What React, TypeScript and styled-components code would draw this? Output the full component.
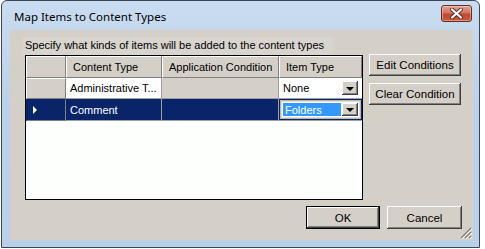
import styled, { createGlobalStyle } from "styled-components";

const GlobalStyle = createGlobalStyle`
  html, body {
    margin: 0;
    padding: 0;
    background: #ffffff;
  }
  body {
    font-family: "Liberation Sans", Arial, sans-serif;
    font-size: 11px;
    color: #000;
  }
`;

const NAVY = "#0a246a";
const FACE = "#d4d0c8";

const App = () => {
  return (
    <>
      <GlobalStyle />
      <Window>
        <TitleBar>
          <Title>Map Items to Content Types</Title>
          <CloseButton aria-label="Close">
            <svg width="13" height="11" viewBox="0 0 13 11">
              <path
                d="M2 1.5 L11 9.5 M11 1.5 L2 9.5"
                stroke="#5a2a20"
                strokeWidth="4"
                strokeLinecap="round"
              />
              <path
                d="M2 1.5 L11 9.5 M11 1.5 L2 9.5"
                stroke="#ffffff"
                strokeWidth="2.2"
                strokeLinecap="round"
              />
            </svg>
          </CloseButton>
        </TitleBar>
        <Client>
          <TopRow>
            <GridColumn>
              <Caption>Specify what kinds of items will be added to the content types</Caption>
              <Grid>
                <HeaderCell />
                <HeaderCell>Content Type</HeaderCell>
                <HeaderCell>Application Condition</HeaderCell>
                <HeaderCell>Item Type</HeaderCell>

                <RowHeader />
                <DataCell>Administrative T...</DataCell>
                <DataCell $readonly />
                <ComboCell>
                  <Combo>
                    <ComboText>None</ComboText>
                    <DropButton>
                      <Arrow />
                    </DropButton>
                  </Combo>
                </ComboCell>

                <RowHeader $selected>
                  <Pointer />
                </RowHeader>
                <DataCell $selected>Comment</DataCell>
                <DataCell $selected />
                <ComboCell $selected>
                  <Combo $active>
                    <ComboText $highlight>Folders</ComboText>
                    <DropButton>
                      <Arrow />
                    </DropButton>
                  </Combo>
                </ComboCell>
              </Grid>
            </GridColumn>
            <SideButtons>
              <Button $w={92} $h={22}>Edit Conditions</Button>
              <Button $w={92} $h={22}>Clear Condition</Button>
            </SideButtons>
          </TopRow>
          <BottomRow>
            <Button $w={74} $h={23} $default>OK</Button>
            <Button $w={75} $h={23}>Cancel</Button>
          </BottomRow>
          <Grip width="12" height="12" viewBox="0 0 12 12">
            <path d="M11 1 L1 11 M11 5 L5 11 M11 9 L9 11" stroke="#808080" strokeWidth="1.2" />
            <path d="M12 2 L2 12 M12 6 L6 12 M12 10 L10 12" stroke="#ffffff" strokeWidth="1" />
          </Grip>
        </Client>
      </Window>
    </>
  );
};

const Window = styled.div`
  box-sizing: border-box;
  margin-left: 1px;
  width: 479px;
  height: 248px;
  border: 1px solid #3b4654;
  border-radius: 6px 6px 0 0;
  background: linear-gradient(180deg, #c9dcf0 0%, #bcd2ea 40%, #b9d0e9 100%);
  padding: 0 6px 7px 8px;
  display: flex;
  flex-direction: column;
  box-shadow: 0 1px 0 #6fb7c0;
`;

const TitleBar = styled.div`
  height: 29px;
  display: flex;
  align-items: center;
  justify-content: space-between;
  padding-top: 2px;
  box-sizing: border-box;
`;

const Title = styled.span`
  font-family: "Noto Sans", "Liberation Sans", sans-serif;
  font-size: 11.5px;
  color: #000;
  margin-left: 4px;
`;

const CloseButton = styled.div`
  box-sizing: border-box;
  width: 31px;
  height: 17px;
  margin-right: 1px;
  margin-top: -6px;
  border: 1px solid #6a2b22;
  border-radius: 3px;
  background: linear-gradient(180deg, #e4a493 0%, #d3735f 45%, #c14a32 55%, #c8593d 100%);
  box-shadow: inset 0 0 0 1px rgba(255, 255, 255, 0.35);
  display: flex;
  align-items: center;
  justify-content: center;
`;

const Client = styled.div`
  position: relative;
  flex: 1;
  background: ${FACE};
  padding: 7px 11px 11px 12px;
  display: flex;
  flex-direction: column;
  gap: 6px;
`;

const TopRow = styled.div`
  display: flex;
  align-items: flex-start;
  gap: 6px;
`;

const GridColumn = styled.div`
  display: flex;
  flex-direction: column;
  width: 341px;
`;

const Caption = styled.div`
  height: 18px;
  width: 311px;
  padding-left: 3px;
  box-sizing: border-box;
  line-height: 16px;
  background: #d8d5ce;
  white-space: nowrap;
`;

const Grid = styled.div`
  margin-left: 3px;
  width: 338px;
  height: 145px;
  box-sizing: border-box;
  border: 1px solid #000;
  background: #fdfffd;
  display: grid;
  grid-template-columns: 40px 96px 117px 83px;
  grid-template-rows: 22px 21px 22px;
  align-content: start;
`;

const HeaderCell = styled.div`
  box-sizing: border-box;
  background: ${FACE};
  border-top: 1px solid #fff;
  border-left: 1px solid #fff;
  border-right: 1px solid #808080;
  border-bottom: 1px solid #808080;
  padding-left: 6px;
  display: flex;
  align-items: center;
  white-space: nowrap;
`;

const RowHeader = styled.div<{ $selected?: boolean }>`
  box-sizing: border-box;
  background: ${(p) => (p.$selected ? NAVY : FACE)};
  border-top: 1px solid ${(p) => (p.$selected ? NAVY : "#fff")};
  border-left: 1px solid ${(p) => (p.$selected ? NAVY : "#fff")};
  border-right: 1px solid #808080;
  border-bottom: 1px solid #808080;
  display: flex;
  align-items: center;
  padding-left: 6px;
`;

const Pointer = styled.div`
  width: 0;
  height: 0;
  border-top: 4px solid transparent;
  border-bottom: 4px solid transparent;
  border-left: 4px solid #fff;
`;

const DataCell = styled.div<{ $selected?: boolean; $readonly?: boolean }>`
  box-sizing: border-box;
  background: ${(p) => (p.$selected ? NAVY : p.$readonly ? FACE : "#fff")};
  color: ${(p) => (p.$selected ? "#fff" : "#000")};
  border-right: 1px solid #a0a0a0;
  border-bottom: 1px solid #a0a0a0;
  padding-left: 4px;
  display: flex;
  align-items: center;
  white-space: nowrap;
  overflow: hidden;
`;

const ComboCell = styled.div<{ $selected?: boolean }>`
  box-sizing: border-box;
  background: ${(p) => (p.$selected ? NAVY : "#fff")};
  border-bottom: 1px solid #a0a0a0;
  padding: 1px;
  display: flex;
`;

const Combo = styled.div<{ $active?: boolean }>`
  flex: 1;
  box-sizing: border-box;
  background: #fff;
  border: 1px solid ${(p) => (p.$active ? "#b8b4ac" : "#fff")};
  box-shadow: ${(p) => (p.$active ? "inset 0 0 0 1px #e4e2dc" : "none")};
  padding: ${(p) => (p.$active ? "2px" : "1px 2px 1px 0")};
  display: flex;
  align-items: stretch;
  gap: 1px;
`;

const ComboText = styled.div<{ $highlight?: boolean }>`
  flex: 1;
  display: flex;
  align-items: center;
  padding-left: 2px;
  background: ${(p) => (p.$highlight ? "#3399ff" : "transparent")};
  color: ${(p) => (p.$highlight ? "#fff" : "#000")};
`;

const DropButton = styled.div`
  box-sizing: border-box;
  width: 16px;
  background: ${FACE};
  box-shadow: inset -1px -1px #404040, inset 1px 1px #fff, inset -2px -2px #808080;
  display: flex;
  align-items: center;
  justify-content: center;
`;

const Arrow = styled.div`
  width: 0;
  height: 0;
  border-left: 4px solid transparent;
  border-right: 4px solid transparent;
  border-top: 4px solid #000;
  margin-top: 1px;
`;

const SideButtons = styled.div`
  margin-top: 17px;
  display: flex;
  flex-direction: column;
  gap: 7px;
`;

const Button = styled.div<{ $w: number; $h: number; $default?: boolean }>`
  box-sizing: border-box;
  width: ${(p) => p.$w}px;
  height: ${(p) => p.$h}px;
  background: ${FACE};
  border: ${(p) => (p.$default ? "1px solid #000" : "none")};
  box-shadow: inset -1px -1px #404040, inset 1px 1px #fff, inset -2px -2px #808080;
  display: flex;
  align-items: center;
  justify-content: center;
  white-space: nowrap;
  font-size: 11.5px;
`;

const BottomRow = styled.div`
  display: flex;
  justify-content: flex-end;
  gap: 7px;
`;

const Grip = styled.svg`
  position: absolute;
  right: 1px;
  bottom: 1px;
`;

export default App;
